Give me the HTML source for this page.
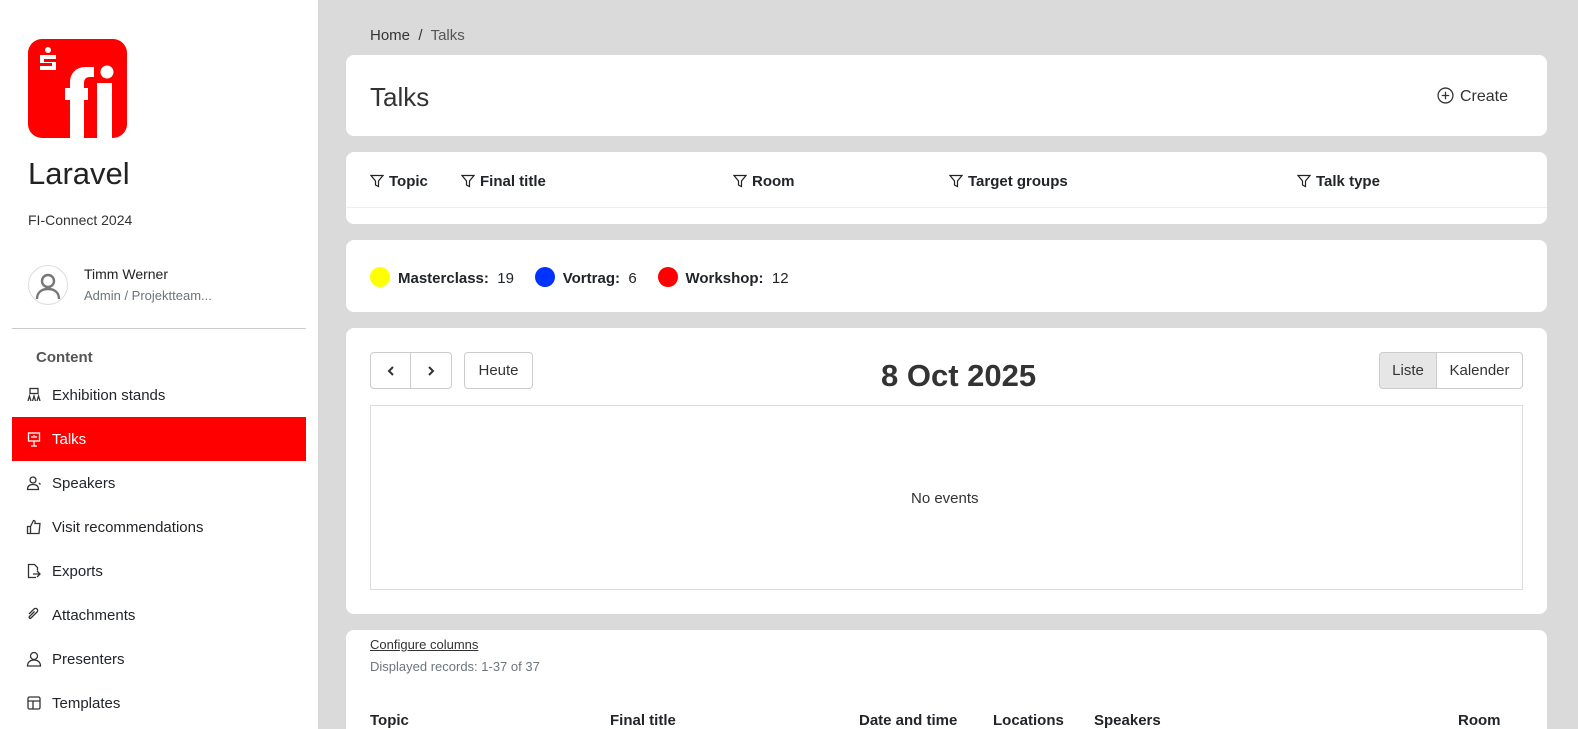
<!DOCTYPE html>
<html><head><meta charset="utf-8"><style>
*{box-sizing:border-box;margin:0;padding:0}
html,body{width:1578px;height:729px;overflow:hidden}
body{background:#dadada;font-family:"Liberation Sans",sans-serif;color:#212529;font-size:15px;position:relative}
.sb{position:absolute;left:0;top:0;width:318px;height:760px;background:#fff}
.logo{position:absolute;left:28px;top:39px;width:99px;height:99px}
.card{position:absolute;left:346px;width:1201px;background:#fff;border-radius:8px}
.abs{position:absolute;white-space:nowrap}
.nav{position:absolute;left:12px;width:294px;height:44px;display:flex;align-items:center;padding-left:14px;font-size:15px}
.nav svg{width:16px;height:16px;margin-right:10px;fill:none;stroke:#333;stroke-width:1.3}
.fh{font-weight:bold;font-size:15px}
.fh svg{width:14px;height:14px;vertical-align:-2px;margin-right:5px;fill:none;stroke:#222;stroke-width:1.2}
.dot{display:inline-block;width:20px;height:20px;border-radius:50%;vertical-align:-4px;margin-right:8px}
.btn{position:absolute;border:1px solid #ccc;border-radius:4px;height:37px;display:flex;align-items:center;justify-content:center;font-size:15px;color:#333}
</style></head><body>
<div class="sb">
 <svg class="logo" viewBox="0 0 99 99">
  <rect width="99" height="99" rx="14" fill="#f00"/>
  <circle cx="20" cy="11" r="3" fill="#fff"/>
  <path d="M12 16h16v4H16v3h12v8H12v-4h12v-3H12z" fill="#fff"/>
  <path d="M42 99V44c0-10 6-16 16-16h8v10h-4c-4 0-6 2-6 6v55z" fill="#fff"/>
  <rect x="37" y="49" width="23" height="12" fill="#fff"/>
  <rect x="69" y="44" width="15" height="55" fill="#fff"/>
  <circle cx="79" cy="33" r="6.5" fill="#fff"/>
 </svg>
 <div class="abs" style="left:28px;top:156px;font-size:31px;font-weight:300;color:#222">Laravel</div>
 <div class="abs" style="left:28px;top:212px;font-size:14px;color:#333">FI-Connect 2024</div>
 <div class="abs" style="left:28px;top:265px;width:40px;height:40px;border:1px solid #ddd;border-radius:50%">
  <svg width="38" height="38" viewBox="0 0 38 38" fill="none" stroke="#777" stroke-width="2.4"><circle cx="19" cy="15" r="6"/><path d="M8 33c0-7 5-10 11-10s11 3 11 10"/></svg>
 </div>
 <div class="abs" style="left:84px;top:266px;font-size:14px;color:#222">Timm Werner</div>
 <div class="abs" style="left:84px;top:288px;font-size:13px;color:#6c757d">Admin / Projektteam...</div>
 <div class="abs" style="left:12px;top:328px;width:294px;height:1px;background:#ccc"></div>
 <div class="abs" style="left:36px;top:349px;font-size:15px;font-weight:bold;color:#555">Content</div>
 <div class="nav" style="top:373px"><svg viewBox="0 0 16 16"><rect x="4" y="1.5" width="8" height="5"/><path d="M2 14l1.5-5 1.5 5M6.5 14l1.5-5 1.5 5M11 14l1.5-5 1.5 5"/></svg>Exhibition stands</div>
 <div class="nav" style="top:417px;background:#f00;color:#fff"><svg viewBox="0 0 16 16" style="stroke:#fff"><rect x="2.5" y="2" width="11" height="8"/><path d="M8 10v5M5 15h6M6 5v2M8 4v3M10 5v2"/></svg>Talks</div>
 <div class="nav" style="top:461px"><svg viewBox="0 0 16 16"><circle cx="7" cy="5" r="3"/><path d="M1.5 14.5c0-4 2.5-5 5.5-5s5.5 1 5.5 5zM13 8l1.5 1.5"/></svg>Speakers</div>
 <div class="nav" style="top:505px"><svg viewBox="0 0 16 16"><path d="M1.5 7.5h3v7h-3zM4.5 7.5l3-6c1.5 0 2 1 1.5 3h5l-1 10h-8.5"/></svg>Visit recommendations</div>
 <div class="nav" style="top:549px"><svg viewBox="0 0 16 16"><path d="M10 14.5H2.5v-13h6l3 3v3M11 8l3 3-3 3M7 11h7"/></svg>Exports</div>
 <div class="nav" style="top:593px"><svg viewBox="0 0 16 16"><path d="M3 7l5-5c2-2 5 1 3 3l-6 6c-1 1-2.5-.5-1.5-1.5l5-5"/></svg>Attachments</div>
 <div class="nav" style="top:637px"><svg viewBox="0 0 16 16"><circle cx="8" cy="5" r="3.5"/><path d="M1.5 15c0-4 3-6 6.5-6s6.5 2 6.5 6z"/></svg>Presenters</div>
 <div class="nav" style="top:681px"><svg viewBox="0 0 16 16"><rect x="2" y="2" width="12" height="12" rx="1.5"/><path d="M2 6h12M7 6v8"/></svg>Templates</div>
</div>

<div class="abs" style="left:370px;top:27px;font-size:15px;color:#333">Home &nbsp;/&nbsp; <span style="color:#555">Talks</span></div>

<div class="card" style="top:55px;height:81px">
 <div class="abs" style="left:24px;top:27px;font-size:26px;font-weight:300;color:#333">Talks</div>
 <div class="abs" style="left:1091px;top:32px;font-size:16px;color:#333"><svg width="17" height="17" viewBox="0 0 16 16" fill="none" stroke="#333" stroke-width="1.2" style="vertical-align:-3px;margin-right:6px"><circle cx="8" cy="8" r="7"/><path d="M8 4.5v7M4.5 8h7"/></svg>Create</div>
</div>

<div class="card" style="top:152px;height:72px">
 <div class="abs" style="left:0;top:55px;width:1201px;height:1px;background:#eee"></div>
 <div class="abs fh" style="left:24px;top:21px"><svg viewBox="0 0 14 14"><path d="M1 1.5h12L8.5 7v5.5L5.5 11V7z"/></svg>Topic</div>
 <div class="abs fh" style="left:115px;top:21px"><svg viewBox="0 0 14 14"><path d="M1 1.5h12L8.5 7v5.5L5.5 11V7z"/></svg>Final title</div>
 <div class="abs fh" style="left:387px;top:21px"><svg viewBox="0 0 14 14"><path d="M1 1.5h12L8.5 7v5.5L5.5 11V7z"/></svg>Room</div>
 <div class="abs fh" style="left:603px;top:21px"><svg viewBox="0 0 14 14"><path d="M1 1.5h12L8.5 7v5.5L5.5 11V7z"/></svg>Target groups</div>
 <div class="abs fh" style="left:951px;top:21px"><svg viewBox="0 0 14 14"><path d="M1 1.5h12L8.5 7v5.5L5.5 11V7z"/></svg>Talk type</div>
</div>

<div class="card" style="top:240px;height:72px">
 <div class="abs" style="left:24px;top:27px;font-size:15px"><span class="dot" style="background:#ff0"></span><b>Masterclass:</b>&nbsp; 19 &nbsp;&nbsp;&nbsp;&nbsp;<span class="dot" style="background:#0033ff"></span><b>Vortrag:</b>&nbsp; 6 &nbsp;&nbsp;&nbsp;&nbsp;<span class="dot" style="background:#f00"></span><b>Workshop:</b>&nbsp; 12</div>
</div>

<div class="card" style="top:328px;height:286px">
 <div class="btn" style="left:24px;top:24px;width:41px;border-radius:4px 0 0 4px"><svg width="12" height="12" viewBox="0 0 12 12" fill="none" stroke="#333" stroke-width="2"><path d="M8 2L4 6l4 4"/></svg></div>
 <div class="btn" style="left:64px;top:24px;width:42px;border-radius:0 4px 4px 0"><svg width="12" height="12" viewBox="0 0 12 12" fill="none" stroke="#333" stroke-width="2"><path d="M4 2l4 4-4 4"/></svg></div>
 <div class="btn" style="left:118px;top:24px;width:69px">Heute</div>
 <div class="abs" style="left:535px;top:30px;font-size:31px;font-weight:bold;color:#333">8 Oct 2025</div>
 <div class="btn" style="left:1033px;top:24px;width:58px;background:#e6e6e6;border-radius:4px 0 0 4px">Liste</div>
 <div class="btn" style="left:1090px;top:24px;width:87px;border-radius:0 4px 4px 0">Kalender</div>
 <div class="abs" style="left:24px;top:77px;width:1153px;height:185px;border:1px solid #ddd"></div>
 <div class="abs" style="left:565px;top:162px;font-size:15px;color:#333">No events</div>
</div>

<div class="card" style="top:630px;height:110px">
 <div class="abs" style="left:24px;top:7px;font-size:13px;color:#333;text-decoration:underline">Configure columns</div>
 <div class="abs" style="left:24px;top:29px;font-size:13px;color:#6c757d">Displayed records: 1-37 of 37</div>
 <div class="abs fh" style="left:24px;top:82px">Topic</div>
 <div class="abs fh" style="left:264px;top:82px">Final title</div>
 <div class="abs fh" style="left:513px;top:82px">Date and time</div>
 <div class="abs fh" style="left:647px;top:82px">Locations</div>
 <div class="abs fh" style="left:748px;top:82px">Speakers</div>
 <div class="abs fh" style="left:1112px;top:82px">Room</div>
</div>
</body></html>
